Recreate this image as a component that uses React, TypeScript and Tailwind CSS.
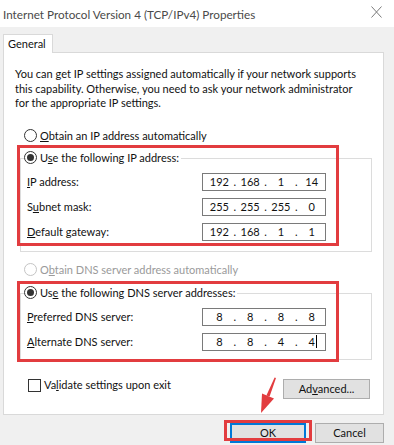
import React from 'react';

const Radio = ({ checked, disabled }: { checked?: boolean; disabled?: boolean }) => (
  <span
    className={`w-[13px] h-[13px] rounded-full border flex items-center justify-center shrink-0 bg-white ${
      disabled ? 'border-[#c4c4c4]' : 'border-[#333333]'
    }`}
  >
    {checked && <span className="w-[7px] h-[7px] rounded-full bg-[#333333]" />}
  </span>
);

const IpBox = ({ octets, caret }: { octets: string[]; caret?: boolean }) => (
  <div className="w-[124px] h-[18px] border border-[#7a7a7a] bg-white flex items-center pl-[3px]">
    {octets.map((o, i) => (
      <React.Fragment key={i}>
        <span className="w-[27px] text-center relative">
          {o}
          {caret && i === 3 && (
            <span className="absolute top-[0px] right-[8px] w-px h-[13px] bg-black" />
          )}
        </span>
        {i < 3 && <span className="w-[4px] text-center">.</span>}
      </React.Fragment>
    ))}
  </div>
);

const Row = ({ label, octets, caret }: { label: React.ReactNode; octets: string[]; caret?: boolean }) => (
  <div className="grid grid-cols-[175px_124px] items-center h-[18px]">
    <span>{label}</span>
    <IpBox octets={octets} caret={caret} />
  </div>
);

export default function App() {
  return (
    <div className="relative w-[394px] h-[445px] overflow-hidden bg-[#f0f0f0] text-[11px] leading-[14px] text-[#111111] font-['Lato',sans-serif]">
      {/* title bar */}
      <div className="h-[27px] bg-white flex items-center justify-between pl-[3px] pr-[12px]">
        <span className="text-[11.7px] text-[#4a4a4a]">Internet Protocol Version 4 (TCP/IPv4) Properties</span>
        <svg width="11" height="12" viewBox="0 0 11 12" className="mb-[4px]">
          <path d="M0.5 0.5 L10.5 11.5 M10.5 0.5 L0.5 11.5" stroke="#7a7a7a" strokeWidth="1" fill="none" />
        </svg>
      </div>

      <div className="pl-[3px] pr-[10px]">
        {/* tab */}
        <div className="pt-[7px] flex">
          <div className="relative z-10 -mb-px w-[50px] h-[19px] bg-white border border-b-0 border-[#d9d9d9] flex items-center pl-[4px]">
            General
          </div>
        </div>

        {/* panel */}
        <div className="bg-white border border-[#d9d9d9] pt-[14px] pb-[15px]">
          <p className="pl-[11px] leading-[14.5px]">
            <span className="block whitespace-nowrap">You can get IP settings assigned automatically if your network supports</span>
            <span className="block whitespace-nowrap">this capability. Otherwise, you need to ask your network administrator</span>
            <span className="block whitespace-nowrap">for the appropriate IP settings.</span>
          </p>

          <div className="mt-[18px] pl-[20px] flex items-center gap-[3px] h-[14px]">
            <Radio />
            <span>
              <span className="underline">O</span>btain an IP address automatically
            </span>
          </div>

          <div className="mt-[15px] ml-[16px] mr-[11px] border border-[#dcdcdc] pb-[10px]">
            <div className="-mt-[8px] ml-[3px] w-fit bg-white pr-[2px] flex items-center gap-[3px] h-[14px]">
              <Radio checked />
              <span>
                U<span className="underline">s</span>e the following IP address:
              </span>
            </div>
            <div className="mt-[8px] pl-[6px] flex flex-col gap-[7px]">
              <Row label={<><span className="underline">I</span>P address:</>} octets={['192', '168', '1', '14']} />
              <Row label={<>S<span className="underline">u</span>bnet mask:</>} octets={['255', '255', '255', '0']} />
              <Row label={<><span className="underline">D</span>efault gateway:</>} octets={['192', '168', '1', '1']} />
            </div>
          </div>

          <div className="mt-[11px] pl-[20px] flex items-center gap-[3px] h-[14px] text-[#9a9a9a]">
            <Radio disabled />
            <span>
              O<span className="underline">b</span>tain DNS server address automatically
            </span>
          </div>

          <div className="mt-[16px] ml-[16px] mr-[11px] border border-[#dcdcdc] pb-[8px]">
            <div className="-mt-[8px] ml-[3px] w-fit bg-white pr-[2px] flex items-center gap-[3px] h-[14px]">
              <Radio checked />
              <span>
                Us<span className="underline">e</span> the following DNS server addresses:
              </span>
            </div>
            <div className="mt-[8px] pl-[6px] flex flex-col gap-[7px]">
              <Row label={<><span className="underline">P</span>referred DNS server:</>} octets={['8', '8', '8', '8']} />
              <Row label={<><span className="underline">A</span>lternate DNS server:</>} octets={['8', '8', '4', '4']} caret />
            </div>
          </div>

          <div className="mt-[19px] pl-[24px] pr-[13px] flex items-start justify-between">
            <div className="flex items-center gap-[3px] h-[13px]">
              <span className="w-[13px] h-[13px] border border-[#333333] bg-white shrink-0" />
              <span>
                Va<span className="underline">l</span>idate settings upon exit
              </span>
            </div>
            <button className="w-[87px] h-[20px] bg-[#e1e1e1] border border-[#adadad] flex items-center justify-center">
              Ad<span className="underline">v</span>anced...
            </button>
          </div>
        </div>

        {/* dialog buttons */}
        <div className="mt-[8px] flex justify-end gap-[9px]">
          <button className="w-[76px] h-[20px] bg-[#e1e1e1] border-2 border-[#0078d7] flex items-center justify-center">
            OK
          </button>
          <button className="w-[69px] h-[20px] bg-[#e1e1e1] border border-[#adadad] flex items-center justify-center">
            Cancel
          </button>
        </div>
      </div>

      {/* red annotation boxes */}
      <div className="absolute left-[17px] top-[145px] w-[322px] h-[101px] border-[3px] border-[#e23c3f] pointer-events-none" />
      <div className="absolute left-[17px] top-[281px] w-[322px] h-[81px] border-[3px] border-[#e23c3f] pointer-events-none" />
      <div className="absolute left-[224px] top-[420px] w-[88px] h-[21px] border-[3px] border-[#e23c3f] pointer-events-none" />

      {/* red arrow */}
      <svg className="absolute inset-0 pointer-events-none" width="394" height="445" viewBox="0 0 394 445">
        <polygon points="276,378 274.6,377.6 266.4,395.6 269.6,396.6" fill="#e23c3f" />
        <polygon points="274,398.5 262,393.5 261,413" fill="#e23c3f" />
      </svg>
    </div>
  );
}
